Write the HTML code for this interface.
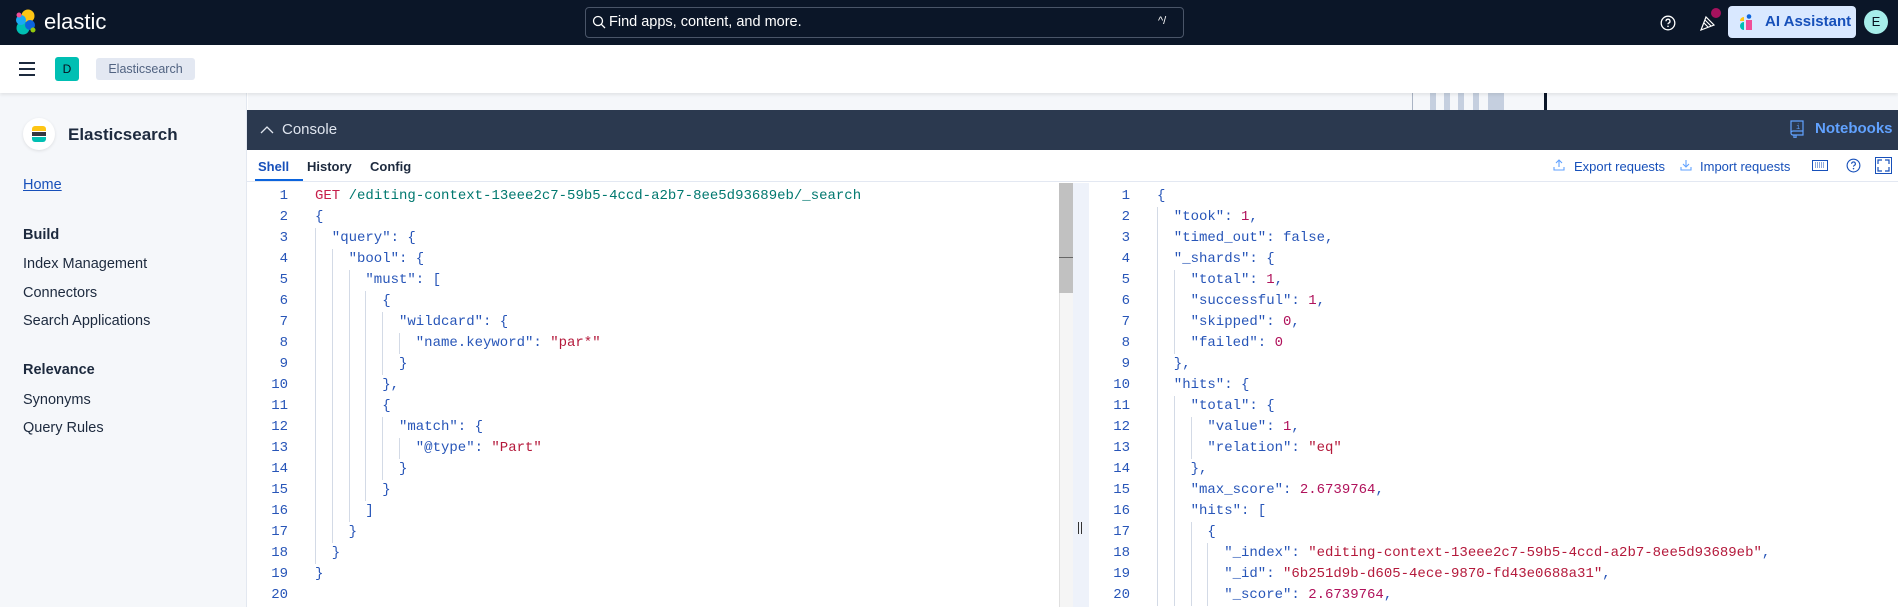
<!DOCTYPE html>
<html><head><meta charset="utf-8"><style>
*{box-sizing:border-box;margin:0;padding:0}
body{width:1898px;height:607px;overflow:hidden;font-family:"Liberation Sans",sans-serif;background:#fff;position:relative}
.a{position:absolute}
.hdr{left:0;top:0;width:1898px;height:45px;background:#0b1628}
.bar2{left:0;top:45px;width:1898px;height:48px;background:#fff;box-shadow:0 2px 3px rgba(0,0,0,.08);z-index:2}
.side{left:0;top:93px;width:247px;height:514px;background:#f5f7fa;border-right:1px solid #e3e8f0}
.side .it{position:absolute;left:23px;font-size:14.5px;color:#1d2a3e}
.side .h{font-weight:bold}
.code{font-family:"Liberation Mono",monospace;font-size:14px;line-height:21px;white-space:pre;color:#2755b8}
.ln{position:absolute;text-align:right;width:40px;color:#2755b8}
.g{display:inline-block;width:16.8px;border-left:1px solid #d3dae6;height:21px;vertical-align:top}
.s{color:#b4193b}.n{color:#b0125b}.m{color:#c61e4a}.p{color:#00786f}
.btn{color:#1750ba;font-size:13px}
</style></head><body>
<div class="a hdr">
 <svg class="a" style="left:14px;top:8px" width="24" height="28" viewBox="0 0 24 28">
  <circle cx="14" cy="8" r="6.5" fill="#fec514"/><circle cx="9" cy="20" r="6.5" fill="#00bfb3"/>
  <circle cx="7" cy="12" r="5" fill="#1ba9f5"/><circle cx="16" cy="17" r="5" fill="#0b64dd"/>
  <circle cx="5" cy="7" r="2.5" fill="#f04e98"/><circle cx="19" cy="22" r="2.5" fill="#93c90e"/>
 </svg>
 <div class="a" style="left:44px;top:9px;color:#fff;font-size:22px">elastic</div>
 <div class="a" style="left:585px;top:7px;width:599px;height:31px;border:1px solid #4a5568;border-radius:4px;background:#0b1628"></div>
 <svg class="a" style="left:592px;top:15px" width="14" height="14" viewBox="0 0 14 14"><circle cx="6" cy="6" r="4.5" stroke="#fff" stroke-width="1.3" fill="none"/><path d="M9.3 9.3L13 13" stroke="#fff" stroke-width="1.3"/></svg>
 <div class="a" style="left:609px;top:14px;color:#fff;font-size:14.5px">Find apps, content, and more.</div>
 <div class="a" style="left:1158px;top:15px;color:#fff;font-size:11px">^/</div>
 <svg class="a" style="left:1660px;top:15px" width="16" height="16" viewBox="0 0 16 16"><circle cx="8" cy="8" r="6.8" stroke="#fff" stroke-width="1.3" fill="none"/><path d="M6 6.2a2 2 0 1 1 2.6 1.9c-.5.2-.6.6-.6 1.1" stroke="#fff" stroke-width="1.3" fill="none"/><circle cx="8" cy="11.3" r=".8" fill="#fff"/></svg>
 <svg class="a" style="left:1699px;top:14px" width="18" height="18" viewBox="0 0 18 18"><path d="M2 16L7 3l8 8z M5 9l4 4 M6 6l6 6" stroke="#fff" stroke-width="1.2" fill="none"/></svg>
 <div class="a" style="left:1711px;top:8px;width:10px;height:10px;border-radius:50%;background:#a6125e"></div>
 <div class="a" style="left:1728px;top:6px;width:128px;height:32px;border-radius:4px;background:#d9e8ff"></div>
 <svg class="a" style="left:1740px;top:14px" width="16" height="16" viewBox="0 0 16 16"><path d="M0 7a4 4 0 0 1 4-4v4z" fill="#fec514"/><path d="M0 12a4 4 0 0 1 4-4v8a4 4 0 0 1-4-4z" fill="#00bfb3"/><rect x="6" y="6" width="6" height="10" fill="#f04e98"/><circle cx="9" cy="2.5" r="2.3" fill="#0b64dd"/></svg>
 <div class="a" style="left:1765px;top:13px;color:#1750ba;font-size:15px;font-weight:bold">AI Assistant</div>
 <div class="a" style="left:1864px;top:10px;width:24px;height:24px;border-radius:50%;background:#a6edea;color:#07101f;font-size:13px;text-align:center;line-height:24px">E</div>
</div>
<div class="a bar2">
 <div class="a" style="left:19px;top:17px;width:16px;height:2px;background:#1d2a3e;box-shadow:0 6px 0 #1d2a3e,0 12px 0 #1d2a3e"></div>
 <div class="a" style="left:55px;top:12px;width:24px;height:24px;border-radius:3px;background:#00bfb3;color:#07101f;font-size:12px;text-align:center;line-height:24px">D</div>
 <div class="a" style="left:96px;top:13px;width:99px;height:22px;border-radius:3px;background:#e3e8f2;color:#516381;font-size:12.5px;text-align:center;line-height:22px">Elasticsearch</div>
</div>
<div class="a side">
 <div class="a" style="left:23px;top:25px;width:32px;height:32px;border-radius:50%;background:#fff;box-shadow:0 1px 3px rgba(0,0,0,.1)"></div>
 <div class="a" style="left:32px;top:33px;width:14px;height:5px;border-radius:3px 3px 0 0;background:#fec514"></div>
 <div class="a" style="left:32px;top:39px;width:14px;height:4px;background:#343741"></div>
 <div class="a" style="left:32px;top:44px;width:14px;height:5px;border-radius:0 0 3px 3px;background:#00bfb3"></div>
 <div class="a" style="left:68px;top:32px;font-size:17px;font-weight:bold;color:#1d2a3e">Elasticsearch</div>
 <div class="it" style="top:84px;color:#1750ba;text-decoration:underline">Home</div>
 <div class="it h" style="top:134px">Build</div>
 <div class="it" style="top:163px">Index Management</div>
 <div class="it" style="top:192px">Connectors</div>
 <div class="it" style="top:220px">Search Applications</div>
 <div class="it h" style="top:269px">Relevance</div>
 <div class="it" style="top:299px">Synonyms</div>
 <div class="it" style="top:327px">Query Rules</div>
</div>
<div class="a" style="left:248px;top:93px;width:1650px;height:17px;background:#f5f7fa"></div>
<div class="a" style="left:1412px;top:93px;width:1px;height:17px;background:#aab4c4"></div>
<div class="a" style="left:1430px;top:93px;width:6px;height:17px;background:#c5cfdf"></div>
<div class="a" style="left:1444px;top:93px;width:6px;height:17px;background:#c5cfdf"></div>
<div class="a" style="left:1458px;top:93px;width:6px;height:17px;background:#c5cfdf"></div>
<div class="a" style="left:1473px;top:93px;width:6px;height:17px;background:#c5cfdf"></div>
<div class="a" style="left:1488px;top:93px;width:16px;height:17px;background:#c5cfdf"></div>
<div class="a" style="left:1544px;top:93px;width:3px;height:17px;background:#0b1628"></div>
<div class="a" style="left:247px;top:110px;width:1651px;height:40px;background:#2b394f">
 <svg class="a" style="left:13px;top:15px" width="14" height="9" viewBox="0 0 14 9"><path d="M1 8l6-6 6 6" stroke="#dfe5ef" stroke-width="1.3" fill="none"/></svg>
 <div class="a" style="left:35px;top:11px;color:#dfe5ef;font-size:15px">Console</div>
 <svg class="a" style="left:1542px;top:10px" width="16" height="18" viewBox="0 0 16 18"><path d="M2 1h12v14H4a2 2 0 0 1-2-2z M2 13a2 2 0 0 1 2-2h10 M5 15v3h2v-3" stroke="#61a2ff" stroke-width="1.2" fill="none"/><text x="7" y="9" font-size="7" fill="#61a2ff" font-family="Liberation Mono">i</text></svg>
 <div class="a" style="left:1568px;top:10px;color:#61a2ff;font-size:15px;font-weight:bold">Notebooks</div>
</div>
<div class="a" style="left:247px;top:150px;width:1651px;height:32px;background:#fff;border-bottom:1px solid #e3e8f2">
 <div class="a" style="left:11px;top:9px;font-size:13px;font-weight:bold;color:#1750ba">Shell</div>
 <div class="a" style="left:8px;top:29px;width:48px;height:2px;background:#0b64dd"></div>
 <div class="a" style="left:60px;top:9px;font-size:13px;font-weight:bold;color:#1d2a3e">History</div>
 <div class="a" style="left:123px;top:9px;font-size:13px;font-weight:bold;color:#1d2a3e">Config</div>
 <svg class="a" style="left:1306px;top:9px" width="12" height="12" viewBox="0 0 12 12"><path d="M6 8V1M3 4l3-3 3 3M1 8v3h10V8" stroke="#61a2ff" stroke-width="1.1" fill="none"/></svg>
 <div class="a btn" style="left:1327px;top:9px">Export requests</div>
 <svg class="a" style="left:1433px;top:9px" width="12" height="12" viewBox="0 0 12 12"><path d="M6 1v7M3 5l3 3 3-3M1 8v3h10V8" stroke="#61a2ff" stroke-width="1.1" fill="none"/></svg>
 <div class="a btn" style="left:1453px;top:9px">Import requests</div>
 <svg class="a" style="left:1565px;top:10px" width="16" height="11" viewBox="0 0 16 11"><rect x=".5" y=".5" width="15" height="10" stroke="#1750ba" fill="none"/><path d="M3 3h10M3 5h10M3 7h10" stroke="#1750ba" stroke-dasharray="1 1"/></svg>
 <svg class="a" style="left:1599px;top:8px" width="15" height="15" viewBox="0 0 16 16"><circle cx="8" cy="8" r="6.8" stroke="#1750ba" stroke-width="1.2" fill="none"/><path d="M6 6.2a2 2 0 1 1 2.6 1.9c-.5.2-.6.6-.6 1.1" stroke="#1750ba" stroke-width="1.2" fill="none"/><circle cx="8" cy="11.3" r=".8" fill="#1750ba"/></svg>
 <svg class="a" style="left:1628px;top:7px" width="17" height="17" viewBox="0 0 17 17"><rect x=".5" y=".5" width="16" height="16" stroke="#1750ba" fill="none"/><path d="M3 7V3h4M10 3h4v4M14 10v4h-4M7 14H3v-4" stroke="#1750ba" stroke-width="1.2" fill="none"/></svg>
</div>
<!-- left editor -->
<div class="a code" style="left:248px;top:186px;width:811px;height:421px">
<div class="ln" style="left:0;top:0">1<br>2<br>3<br>4<br>5<br>6<br>7<br>8<br>9<br>10<br>11<br>12<br>13<br>14<br>15<br>16<br>17<br>18<br>19<br>20</div>
<div class="a" style="left:67px;top:0"><span class="m">GET</span> <span class="p">/editing-context-13eee2c7-59b5-4ccd-a2b7-8ee5d93689eb/_search</span>
{
<span class="g"></span>"query": {
<span class="g"></span><span class="g"></span>"bool": {
<span class="g"></span><span class="g"></span><span class="g"></span>"must": [
<span class="g"></span><span class="g"></span><span class="g"></span><span class="g"></span>{
<span class="g"></span><span class="g"></span><span class="g"></span><span class="g"></span><span class="g"></span>"wildcard": {
<span class="g"></span><span class="g"></span><span class="g"></span><span class="g"></span><span class="g"></span><span class="g"></span>"name.keyword": <span class="s">"par*"</span>
<span class="g"></span><span class="g"></span><span class="g"></span><span class="g"></span><span class="g"></span>}
<span class="g"></span><span class="g"></span><span class="g"></span><span class="g"></span>},
<span class="g"></span><span class="g"></span><span class="g"></span><span class="g"></span>{
<span class="g"></span><span class="g"></span><span class="g"></span><span class="g"></span><span class="g"></span>"match": {
<span class="g"></span><span class="g"></span><span class="g"></span><span class="g"></span><span class="g"></span><span class="g"></span>"@type": <span class="s">"Part"</span>
<span class="g"></span><span class="g"></span><span class="g"></span><span class="g"></span><span class="g"></span>}
<span class="g"></span><span class="g"></span><span class="g"></span><span class="g"></span>}
<span class="g"></span><span class="g"></span><span class="g"></span>]
<span class="g"></span><span class="g"></span>}
<span class="g"></span>}
}
</div>
</div>
<div class="a" style="left:1059px;top:183px;width:14px;height:424px;background:#f5f5f5;border-left:1px solid #e0e0e0"></div>
<div class="a" style="left:1059px;top:183px;width:14px;height:110px;background:#c1c1c1"></div>
<div class="a" style="left:1059px;top:257px;width:14px;height:1px;background:#666"></div>
<div class="a" style="left:1073px;top:183px;width:16px;height:424px;background:#eef2fa"></div>
<div class="a" style="left:1078px;top:522px;width:1px;height:12px;background:#333"></div>
<div class="a" style="left:1081px;top:522px;width:1px;height:12px;background:#333"></div>
<!-- right editor -->
<div class="a code" style="left:1090px;top:186px;width:808px;height:421px">
<div class="ln" style="left:0;top:0">1<br>2<br>3<br>4<br>5<br>6<br>7<br>8<br>9<br>10<br>11<br>12<br>13<br>14<br>15<br>16<br>17<br>18<br>19<br>20</div>
<div class="a" style="left:67px;top:0">{
<span class="g"></span>"took": <span class="n">1</span>,
<span class="g"></span>"timed_out": false,
<span class="g"></span>"_shards": {
<span class="g"></span><span class="g"></span>"total": <span class="n">1</span>,
<span class="g"></span><span class="g"></span>"successful": <span class="n">1</span>,
<span class="g"></span><span class="g"></span>"skipped": <span class="n">0</span>,
<span class="g"></span><span class="g"></span>"failed": <span class="n">0</span>
<span class="g"></span>},
<span class="g"></span>"hits": {
<span class="g"></span><span class="g"></span>"total": {
<span class="g"></span><span class="g"></span><span class="g"></span>"value": <span class="n">1</span>,
<span class="g"></span><span class="g"></span><span class="g"></span>"relation": <span class="s">"eq"</span>
<span class="g"></span><span class="g"></span>},
<span class="g"></span><span class="g"></span>"max_score": <span class="n">2.6739764</span>,
<span class="g"></span><span class="g"></span>"hits": [
<span class="g"></span><span class="g"></span><span class="g"></span>{
<span class="g"></span><span class="g"></span><span class="g"></span><span class="g"></span>"_index": <span class="s">"editing-context-13eee2c7-59b5-4ccd-a2b7-8ee5d93689eb"</span>,
<span class="g"></span><span class="g"></span><span class="g"></span><span class="g"></span>"_id": <span class="s">"6b251d9b-d605-4ece-9870-fd43e0688a31"</span>,
<span class="g"></span><span class="g"></span><span class="g"></span><span class="g"></span>"_score": <span class="n">2.6739764</span>,
</div>
</div>
</body></html>
